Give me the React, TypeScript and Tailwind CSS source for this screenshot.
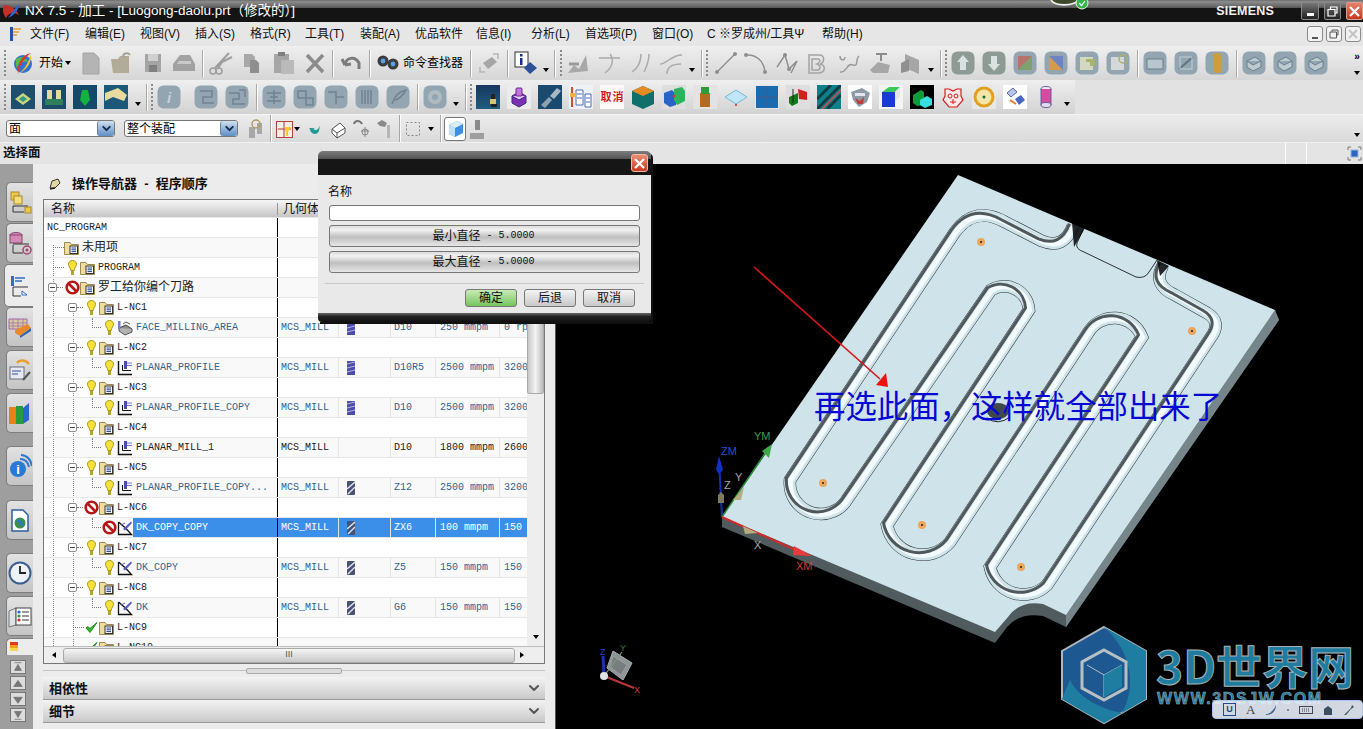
import type { ReactNode } from "react"
import { ChevronDown } from "lucide-react"

const cjk = "[font-family:'Liberation_Sans','Noto_Sans_CJK_SC',sans-serif]"
const mono = "[font-family:'Liberation_Mono','Noto_Sans_CJK_SC',monospace]"

type Row = {
    lvl: 0 | 1 | 2 | 3
    name: string
    state?: "bulb" | "ban" | "check"
    box?: boolean
    op?: "face" | "planar" | "dk" | "flat"
    sel?: boolean
    black?: boolean
    cells?: [string, "" | "mill" | "drill", string, string, string]
}

const rows: Row[] = [
    { lvl: 0, name: "NC_PROGRAM" },
    { lvl: 1, name: "未用项" },
    { lvl: 1, name: "PROGRAM", state: "bulb" },
    { lvl: 1, name: "罗工给你编个刀路", state: "ban", box: true },
    { lvl: 2, name: "L-NC1", state: "bulb", box: true },
    { lvl: 3, name: "FACE_MILLING_AREA", state: "bulb", op: "face", cells: ["MCS_MILL", "mill", "D10", "250 mmpm", "0 rpm"] },
    { lvl: 2, name: "L-NC2", state: "bulb", box: true },
    { lvl: 3, name: "PLANAR_PROFILE", state: "bulb", op: "planar", cells: ["MCS_MILL", "mill", "D10R5", "2500 mmpm", "3200"] },
    { lvl: 2, name: "L-NC3", state: "bulb", box: true },
    { lvl: 3, name: "PLANAR_PROFILE_COPY", state: "bulb", op: "planar", cells: ["MCS_MILL", "mill", "D10", "2500 mmpm", "3200"] },
    { lvl: 2, name: "L-NC4", state: "bulb", box: true },
    { lvl: 3, name: "PLANAR_MILL_1", state: "bulb", op: "planar", black: true, cells: ["MCS_MILL", "", "D10", "1800 mmpm", "2600"] },
    { lvl: 2, name: "L-NC5", state: "bulb", box: true },
    { lvl: 3, name: "PLANAR_PROFILE_COPY...", state: "bulb", op: "planar", cells: ["MCS_MILL", "drill", "Z12", "2500 mmpm", "3200"] },
    { lvl: 2, name: "L-NC6", state: "ban", box: true },
    { lvl: 3, name: "DK_COPY_COPY", state: "ban", op: "dk", sel: true, cells: ["MCS_MILL", "drill", "ZX6", "100 mmpm", "150"] },
    { lvl: 2, name: "L-NC7", state: "bulb", box: true },
    { lvl: 3, name: "DK_COPY", state: "bulb", op: "dk", cells: ["MCS_MILL", "drill", "Z5", "150 mmpm", "150"] },
    { lvl: 2, name: "L-NC8", state: "bulb", box: true },
    { lvl: 3, name: "DK", state: "bulb", op: "dk", cells: ["MCS_MILL", "drill", "G6", "150 mmpm", "150"] },
    { lvl: 2, name: "L-NC9", state: "check" },
    { lvl: 2, name: "L-NC10", state: "check" },
]

const menus: [string, string][] = [
    ["文件(F)", "w-[55px]"],
    ["编辑(E)", "w-[55px]"],
    ["视图(V)", "w-[55px]"],
    ["插入(S)", "w-[55px]"],
    ["格式(R)", "w-[55px]"],
    ["工具(T)", "w-[55px]"],
    ["装配(A)", "w-[55px]"],
    ["优品软件", "w-[61px]"],
    ["信息(I)", "w-[55px]"],
    ["分析(L)", "w-[54px]"],
    ["首选项(P)", "w-[67px]"],
    ["窗口(O)", "w-[55px]"],
    ["C ※罗成州/工具Ψ", "w-[115px]"],
    ["帮助(H)", "w-[50px]"],
]

function Box({ w = 24, h = 24, className = "", children }: { w?: number; h?: number; className?: string; children: ReactNode }) {
    return (
        <svg width={w} height={h} viewBox={`0 0 ${w} ${h}`} className={"shrink-0 " + className}>
            {children}
        </svg>
    )
}

function Bulb() {
    return (
        <Box w={9} h={16}>
            <path d="M4.5 0.5C7 0.5 8.5 2.2 8.5 4.2 8.5 6.5 6.4 7.5 6.2 10.5H2.8C2.6 7.5 0.5 6.5 0.5 4.2 0.5 2.2 2 0.5 4.5 0.5Z" fill="#f8e23a" stroke="#a89520" />
            <rect x="3" y="11" width="3" height="4" fill="#b5a040" />
        </Box>
    )
}

function Ban() {
    return (
        <Box w={15} h={15}>
            <circle cx="7.5" cy="7.5" r="5.8" fill="#fff" stroke="#b51818" strokeWidth="2.6" />
            <path d="M3.5 3.5L11.5 11.5" stroke="#b51818" strokeWidth="2.6" />
        </Box>
    )
}

function Check() {
    return (
        <Box w={13} h={13}>
            <path d="M1 7L5 11.5 12 1.5 5 7.5 3 5.5Z" fill="#2fb32f" stroke="#1e8f1e" />
        </Box>
    )
}

function Folder() {
    return (
        <Box w={15} h={14}>
            <path d="M0.5 1.5H6L7.5 3.5H14.5V13.5H0.5Z" fill="#f0dd9c" stroke="#9a8a55" />
            <rect x="6" y="5" width="7.5" height="7.5" fill="#fff" stroke="#333" />
            <path d="M7.5 7H12M7.5 8.8H12M7.5 10.6H12" stroke="#1f3f8a" />
        </Box>
    )
}

function OpIcon({ kind }: { kind: Row["op"] }) {
    if (kind === "face") {
        return (
            <Box w={17} h={16}>
                <path d="M2 8L9 5 15 9 8 13Z" fill="#8c8c8c" stroke="#444" />
                <path d="M2 8V11L8 15 15 12V9" fill="#b3b3b3" stroke="#555" />
                <rect x="1" y="1" width="2.5" height="8" fill="#7d7fc8" />
                <path d="M6 4L9 2 13 4" stroke="#555" fill="none" />
            </Box>
        )
    }
    if (kind === "planar") {
        return (
            <Box w={16} h={16}>
                <path d="M1.5 1V14.5H15" stroke="#111" strokeWidth="1.4" fill="none" />
                <path d="M5.5 10.5V5" stroke="#111" fill="none" />
                <path d="M5.5 10.5H14" stroke="#111" />
                <rect x="7" y="1" width="3" height="8" fill="#4a4ab8" />
                <path d="M10 3H15M10 5.5H15" stroke="#7a7ad6" />
            </Box>
        )
    }
    return (
        <Box w={16} h={16}>
            <path d="M1.5 2V14.5H14.5L9 8.5 1.5 2" stroke="#111" strokeWidth="1.3" fill="none" />
            <path d="M6 9L14 1.5 15 3 8 10.5Z" fill="#5a5ac8" />
            <path d="M4 5L8 3" stroke="#5a5ac8" />
        </Box>
    )
}

function Minus() {
    return (
        <span className="flex h-[9px] w-[9px] shrink-0 items-center justify-center rounded-[2px] border border-[#8a8a8a] bg-white">
            <span className="h-px w-[5px] bg-[#444]" />
        </span>
    )
}

function Dots({ className = "" }: { className?: string }) {
    return <span className={"block border-t border-dotted border-[#777] " + className} />
}

function ToolIcon({ kind }: { kind: "" | "mill" | "drill" }) {
    if (kind === "mill") {
        return (
            <Box w={8} h={14}>
                <rect width="8" height="14" fill="#4c4cae" />
                <path d="M0 3L8 1M0 7L8 5M0 11L8 9" stroke="#b4b4e8" />
            </Box>
        )
    }
    if (kind === "drill") {
        return (
            <Box w={8} h={14}>
                <rect width="8" height="14" rx="1" fill="#4b5170" />
                <path d="M0 8L8 1M1 13L8 6" stroke="#e0e4f0" strokeWidth="1.4" />
            </Box>
        )
    }
    return null
}

function TreeRow({ row, even }: { row: Row; even: boolean }) {
    const textColor = row.sel ? "text-white" : row.lvl === 3 && !row.black ? "text-[#2f6492]" : "text-[#222]"
    const isCjk = /[^\x00-\x7f]/.test(row.name)
    const pad = row.lvl === 2 ? "pl-[24px]" : row.lvl === 3 ? "pl-[48px]" : row.lvl === 1 ? "pl-[4px]" : "pl-[3px]"
    return (
        <div className={"relative flex h-5 shrink-0 border-t border-[#e6e6e6] " + (even ? "bg-black/[0.025]" : "")}>
            <div className={"flex w-[234px] shrink-0 items-center border-r border-black " + pad}>
                {(row.lvl === 1 || row.lvl === 2) && (
                    <span className="flex w-4 shrink-0 items-center">
                        {row.box ? <Minus /> : <Dots className="ml-[5px] w-[11px]" />}
                        {row.box && <Dots className="w-[6px]" />}
                    </span>
                )}
                {row.lvl === 3 && <span className="mb-[10px] h-[10px] w-[9px] shrink-0 border-b border-l border-dotted border-[#777]" />}
                {row.lvl > 0 && row.state && (
                    <span className={"flex shrink-0 items-center justify-center " + (row.lvl === 1 ? "w-4" : row.lvl === 2 ? "w-[15px]" : "w-4 pl-[1px]")}>
                        {row.state === "bulb" ? <Bulb /> : row.state === "ban" ? <Ban /> : <Check />}
                    </span>
                )}
                {row.lvl === 3 ? (
                    <span className="flex w-[19px] shrink-0"><OpIcon kind={row.op} /></span>
                ) : row.lvl > 0 ? (
                    <span className="flex w-[18px] shrink-0"><Folder /></span>
                ) : null}
                <span className={"flex h-full flex-1 items-center whitespace-nowrap " + (row.sel ? "-ml-[3px] bg-[#3b8fe8] pl-[3px] " : "") + (isCjk ? "text-[12px] " : "text-[10px] ") + mono + " " + textColor}>
                    {row.name}
                </span>
            </div>
            {row.cells ? (
                <div className={"flex flex-1 items-center text-[10px] " + mono + " " + (row.sel ? "bg-[#3b8fe8] text-white" : row.black ? "text-[#222]" : "text-[#2f6492]")}>
                    <span className="flex h-full w-[61px] items-center border-r border-[#e4e4e4] pl-[3px]">{row.cells[0]}</span>
                    <span className="flex h-full w-[52px] items-center border-r border-[#e4e4e4] pl-[8px]"><ToolIcon kind={row.cells[1]} /></span>
                    <span className="flex h-full w-[45px] items-center border-r border-[#e4e4e4] pl-[3px]">{row.cells[2]}</span>
                    <span className="flex h-full w-[64px] items-center border-r border-[#e4e4e4] pl-[4px]">{row.cells[3]}</span>
                    <span className="flex h-full w-[27px] items-center overflow-hidden whitespace-nowrap pl-[4px]">{row.cells[4]}</span>
                </div>
            ) : (
                <div className="flex-1" />
            )}
        </div>
    )
}

function Caret({ className = "" }: { className?: string }) {
    return <span className={"h-0 w-0 shrink-0 border-x-[3px] border-t-[4px] border-x-transparent border-t-black " + className} />
}

function Sep({ className = "" }: { className?: string }) {
    return <span className={"h-[27px] w-[2px] shrink-0 border-x border-l-[#a8a8a8] border-r-white " + className} />
}

function Grip({ className = "" }: { className?: string }) {
    return <span className={"h-[26px] w-[2px] shrink-0 border-l-2 border-dotted border-[#8a8a8a] " + className} />
}

function Tile({ className = "", tone = "#93a5b0", children }: { className?: string; tone?: string; children?: ReactNode }) {
    return (
        <Box className={className}>
            <rect x="0.5" y="0.5" width="23" height="23" rx="6" fill={tone} />
            {children}
        </Box>
    )
}

const gl = { fill: "none", stroke: "#6f8490", strokeWidth: 1.5 }

function ToolbarOne() {
    return (
        <div className="flex h-[34px] items-center bg-gradient-to-b from-[#efefef] to-[#d6d6d6] pl-[4px]">
            <Grip />
            <Box className="ml-[5px]">
                <circle cx="12" cy="13" r="9" fill="#2f73d8" />
                <path d="M5 8C9 5 15 6 18 12 14 9 9 10 5 17Z" fill="#58b84a" />
                <path d="M20 2C14 6 9 13 7 23 6 14 10 4 20 2Z" fill="#e0332a" />
                <path d="M20 3C21 10 17 18 9 22 15 16 18 10 20 3Z" fill="#f2c428" />
            </Box>
            <span className="ml-[4px] w-[24px] whitespace-nowrap text-[12px] text-black">开始</span>
            <Caret className="ml-[2px]" />
            <Box w={20} className="ml-[10px]">
                <path d="M2 2H13L18 7V23H2Z" fill="#b4b4b4" stroke="#a4a4a4" />
            </Box>
            <Box className="ml-[9px]">
                <path d="M1 8H8L10 5H19V22H3Z" fill="#b1ab98" />
                <path d="M13 6C13 2 18 1 20 4" fill="none" stroke="#a5a093" strokeWidth="2" />
            </Box>
            <Box w={18} className="ml-[10px]">
                <rect x="1" y="3" width="16" height="18" fill="#a4a4a4" />
                <rect x="4" y="3" width="10" height="7" fill="#cfcfcf" />
                <rect x="5" y="14" width="8" height="7" fill="#7f7f7f" />
            </Box>
            <Box className="ml-[10px]">
                <path d="M1 13L8 4H18L23 13V20H1Z" fill="#a2a2a2" />
                <path d="M5 13H19V10H7Z" fill="#c9c9c9" />
            </Box>
            <Sep className="ml-[6px]" />
            <Box className="ml-[5px]">
                <circle cx="4" cy="20" r="3" {...gl} stroke="#9e9e9e" />
                <circle cx="10" cy="20" r="3" {...gl} stroke="#9e9e9e" />
                <path d="M6 17L20 2M9 17L13 11M13 11L23 6" stroke="#9e9e9e" strokeWidth="2" fill="none" />
            </Box>
            <Box w={21} className="ml-[8px]">
                <path d="M3 3H11L14 6V16H3Z" fill="#a8a8a8" />
                <path d="M9 9H15L18 12V22H9Z" fill="#8e8e8e" />
            </Box>
            <Box className="ml-[10px]">
                <rect x="2" y="3" width="15" height="19" fill="#a6a6a6" />
                <rect x="6" y="1" width="7" height="4" fill="#7f7f7f" />
                <rect x="9" y="9" width="13" height="14" fill="#bababa" />
            </Box>
            <Box w={20} className="ml-[9px]">
                <path d="M2 4L18 21M18 4L2 21" stroke="#8b8b8b" strokeWidth="3.5" />
            </Box>
            <Sep className="ml-[7px]" />
            <Box className="ml-[6px]">
                <path d="M5 14C6 6 15 5 19 12V18M5 14L2 8M5 14L11 13" fill="none" stroke="#7c7c7c" strokeWidth="3" />
            </Box>
            <Sep className="ml-[5px]" />
            <Box className="ml-[5px]">
                <circle cx="7" cy="10" r="5.5" fill="#3c3c3c" />
                <circle cx="17" cy="13" r="5.5" fill="#3c3c3c" />
                <circle cx="7" cy="10" r="2.4" fill="#5ba0e6" />
                <circle cx="17" cy="13" r="2.4" fill="#5ba0e6" />
            </Box>
            <span className="ml-[3px] w-[60px] whitespace-nowrap text-[12px] text-black">命令查找器</span>
            <Sep className="ml-[7px]" />
            <Box className="ml-[5px]">
                <path d="M6 12L15 6 20 11 11 18Z" fill="#a5a5a5" />
                <path d="M3 16V21H8M21 8V3H16" fill="none" stroke="#b5b5b5" strokeWidth="1.5" />
            </Box>
            <Sep className="ml-[6px]" />
            <Box className="ml-[5px]">
                <rect x="1" y="1" width="13" height="15" fill="#fff" stroke="#333" />
                <rect x="6" y="3" width="2.5" height="2.5" fill="#1c2a8e" />
                <rect x="6" y="7" width="2.5" height="7" fill="#1c2a8e" />
                <path d="M16 11L23 17 16 23 10 17Z" fill="#2c4f96" />
            </Box>
            <Caret className="ml-[5px] mt-[14px]" />
            <Sep className="ml-[5px]" />
            <Grip className="ml-[4px]" />
            <Box className="ml-[4px]">
                <path d="M2 22L8 14 13 18 20 4 22 20Z" fill="#a8a8a8" />
                <path d="M3 13H13" stroke="#9a9a9a" strokeWidth="3" />
            </Box>
            <Box className="ml-[8px]">
                <path d="M1 7H22M7 22C15 16 16 8 12 3" {...gl} stroke="#ababab" />
            </Box>
            <Box className="ml-[7px]">
                <path d="M3 21C9 17 12 10 12 3M15 21C18 15 20 10 20 3" {...gl} stroke="#ababab" />
            </Box>
            <Box className="ml-[6px]">
                <path d="M1 13C8 13 12 4 23 4M8 23C8 15 14 13 22 13" {...gl} stroke="#ababab" />
            </Box>
            <Caret className="ml-[6px] mt-[14px]" />
            <Sep className="ml-[6px]" />
            <Grip className="ml-[3px]" />
            <Box className="ml-[6px]">
                <path d="M3 21L21 3" stroke="#8f8f8f" strokeWidth="1.5" />
                <circle cx="3" cy="21" r="2" fill="#8f8f8f" />
                <circle cx="21" cy="3" r="2" fill="#8f8f8f" />
            </Box>
            <Box className="ml-[6px]">
                <path d="M2 4C12 3 20 10 21 21" {...gl} stroke="#8f8f8f" />
                <circle cx="2" cy="4" r="2" fill="#8f8f8f" />
                <circle cx="21" cy="21" r="2" fill="#8f8f8f" />
            </Box>
            <Box className="ml-[7px]">
                <path d="M2 16L10 4 14 18 22 10 16 22" {...gl} stroke="#8f8f8f" />
                <circle cx="10" cy="4" r="2" fill="#8f8f8f" />
                <circle cx="14" cy="18" r="2" fill="#8f8f8f" />
            </Box>
            <Box className="ml-[7px]">
                <path d="M3 4H13C20 4 18 12 14 13 20 14 20 22 12 22H3Z" {...gl} stroke="#a4a4a4" />
                <path d="M6 8H12C15 8 14 12 11 13 15 14 15 19 11 19H6Z" {...gl} stroke="#a4a4a4" />
            </Box>
            <Box className="ml-[7px]">
                <path d="M3 5C3 10 8 10 8 6M3 21C10 22 10 11 16 14 22 16 18 8 22 5" {...gl} stroke="#9b9b9b" />
            </Box>
            <Box className="ml-[7px]">
                <path d="M2 19L10 11 22 14 20 22H5Z" fill="#a7a7a7" />
                <path d="M8 3H19M13 3V10" stroke="#8b8b8b" strokeWidth="2" />
            </Box>
            <Box className="ml-[7px]">
                <path d="M6 3L20 9V23L6 17Z" fill="#a6a6a6" />
                <path d="M2 12L10 8V20L2 22Z" fill="#8f8f8f" />
            </Box>
            <Caret className="ml-[5px] mt-[14px]" />
            <Sep className="ml-[6px]" />
            <Grip className="ml-[3px]" />
            <span className="ml-[4px] flex items-center gap-[7px]">
                <Tile tone="#8e9a94"><path d="M12 4L18 11H15V19H9V11H6Z" fill="#d9e2e0" /></Tile>
                <Tile tone="#8e9a94"><path d="M12 20L18 13H15V5H9V13H6Z" fill="#d9e2e0" /></Tile>
                <Tile><path d="M5 5H19L5 19Z" fill="#b4746a" /><path d="M19 5V19H5Z" fill="#7fa06f" /></Tile>
                <Tile><path d="M5 5L19 19H5Z" fill="#d59a52" /><path d="M5 5H19V19Z" fill="#6a84c4" /></Tile>
                <Tile><rect x="5" y="6" width="13" height="13" fill="#d3d9c0" /><path d="M11 8H20V15H15V11H11Z" fill="#a6b46e" /></Tile>
                <Tile><rect x="5" y="6" width="13" height="13" fill="#d3d9d9" /><circle cx="17" cy="8" r="4" fill="none" stroke="#a6b46e" strokeWidth="1.5" /></Tile>
            </span>
            <Sep className="ml-[7px]" />
            <span className="ml-[4px] flex items-center gap-[7px]">
                <Tile><rect x="4" y="8" width="16" height="10" fill="#b8c6ce" stroke="#6c7f8b" /></Tile>
                <Tile><path d="M5 18L19 6" stroke="#5f7480" strokeWidth="2" /><rect x="6" y="6" width="12" height="12" fill="none" stroke="#c2cdd3" /></Tile>
                <Tile><rect x="8" y="2" width="8" height="20" rx="3" fill="#c99f3c" /></Tile>
            </span>
            <Sep className="ml-[7px]" />
            <span className="ml-[4px] flex items-center gap-[7px]">
                <Tile><path d="M5 10L13 6 19 10 11 14ZM5 10V16L11 20 19 16V10" fill="#bccad2" stroke="#6b7f8b" /></Tile>
                <Tile><path d="M5 10L13 6 19 10 11 14ZM5 10V16L11 20 19 16V10" fill="#bccad2" stroke="#6b7f8b" /></Tile>
                <Tile><path d="M5 10L13 6 19 10 11 14ZM5 10V16L11 20 19 16V10" fill="#bccad2" stroke="#6b7f8b" /></Tile>
            </span>
            <span className="ml-[26px] flex flex-col items-center gap-[9px] text-[10px] leading-none text-black">
                <span className="font-bold">»</span>
                <Caret />
            </span>
        </div>
    )
}

function Shot({ bg, className = "", children }: { bg: string; className?: string; children?: ReactNode }) {
    return (
        <Box className={className}>
            <rect width="24" height="24" fill={bg} />
            {children}
        </Box>
    )
}

function ToolbarTwo() {
    return (
        <div className="flex h-[34px] items-center bg-[#e2e2e2]">
            <div className="flex h-full w-[1075px] shrink-0 items-center bg-gradient-to-b from-[#efefef] to-[#d2d2d2] pl-[4px]">
                <Grip />
                <span className="ml-[5px] flex items-center gap-[7px]">
                    <Shot bg="#1f4f6e"><path d="M4 14L12 8 20 14 12 20Z" fill="#c9d67c" /><path d="M8 14L12 11 16 14 12 17Z" fill="#2f9a8a" /></Shot>
                    <Shot bg="#1c4a68"><rect x="5" y="5" width="5" height="12" fill="#e2d9a2" /><rect x="14" y="5" width="5" height="12" fill="#e2d9a2" /><rect x="3" y="14" width="18" height="6" fill="#2f7f5a" /></Shot>
                    <Shot bg="#14496a"><path d="M9 5H15L17 15 12 21 7 15Z" fill="#13b23c" /></Shot>
                    <Shot bg="#1c5878"><path d="M1 8L14 3 23 10 20 16 9 12 1 16Z" fill="#e8dba0" /></Shot>
                </span>
                <Caret className="ml-[7px] mt-[14px]" />
                <Sep className="ml-[5px]" />
                <Grip className="ml-[3px]" />
                <Tile className="ml-[4px]"><text x="12" y="18" textAnchor="middle" fontSize="15" fontStyle="italic" fontWeight="bold" fill="#c4d0d7">i</text></Tile>
                <span className="ml-[13px] flex items-center gap-[7px]">
                    <Tile><path d="M6 6H18V12H9V18H20" {...gl} /></Tile>
                    <Tile><path d="M4 8H14V14H8V19H20M14 5H20V12" {...gl} /></Tile>
                </span>
                <Sep className="ml-[7px]" />
                <span className="ml-[4px] flex items-center gap-[7px]">
                    <Tile><path d="M5 8H19M8 12H16M5 16H19M12 5V19" {...gl} /></Tile>
                    <Tile><path d="M5 6H13V13H5ZM13 13H20V20H13Z" {...gl} /></Tile>
                    <Tile><path d="M4 7H12V12H20M12 12V19" {...gl} /></Tile>
                    <Tile><path d="M7 5V19M10 5V19M13 5V19M16 5V19" {...gl} /></Tile>
                    <Tile><path d="M6 19C9 10 14 6 20 5 17 10 14 14 9 15" {...gl} /></Tile>
                </span>
                <Sep className="ml-[7px]" />
                <Tile className="ml-[4px]"><circle cx="12" cy="12" r="7" fill="#aebbc2" /><circle cx="12" cy="12" r="3" fill="#93a5b0" /></Tile>
                <Caret className="ml-[6px] mt-[14px]" />
                <Sep className="ml-[6px]" />
                <Grip className="ml-[3px]" />
                <span className="ml-[4px] flex items-center gap-[7px]">
                    <Box>
                        <defs>
                            <linearGradient id="navy" x1="0" y1="0" x2="0" y2="1">
                                <stop offset="0" stopColor="#17365e" />
                                <stop offset="1" stopColor="#1f5d80" />
                            </linearGradient>
                        </defs>
                        <rect width="24" height="24" fill="url(#navy)" />
                        <rect x="15" y="9" width="4" height="6" fill="#222" />
                        <rect x="14" y="14" width="6" height="5" fill="#d8c66a" />
                        <rect x="15" y="19" width="6" height="3" fill="#222" />
                    </Box>
                    <Shot bg="#ececec"><path d="M5 11L12 7 19 11V18L12 22 5 18Z" fill="#7d2fb3" stroke="#3f2a7a" /><path d="M5 11L12 15 19 11" fill="#e6c8f2" stroke="#3f2a7a" /><rect x="9" y="3" width="6" height="8" rx="1" fill="#c873d8" stroke="#6b2a8a" /></Shot>
                    <Shot bg="#1a4a6e"><path d="M12 11L19 3 23 6 16 14Z" fill="#a9b9c4" /><path d="M3 20L11 12 14 15 7 23Z" fill="#8ea3b2" /></Shot>
                    <Shot bg="#eef2f6"><path d="M3 2V22" stroke="#d94a2a" strokeWidth="2" /><path d="M7 5H14V20H7ZM16 9H22V22H16Z" fill="#fff" stroke="#4a6db5" /><path d="M8 9H13M8 13H13M17 13H21M17 17H21" stroke="#4a6db5" /><rect x="1" y="8" width="6" height="4" fill="#f2b33a" /></Shot>
                    <Shot bg="#fdf8f8"><text x="6" y="16" textAnchor="middle" fontSize="11" fill="#d01818" fontWeight="bold">取</text><text x="18" y="16" textAnchor="middle" fontSize="11" fill="#d01818" fontWeight="bold">消</text></Shot>
                    <Box>
                        <path d="M12 1L23 6V19L12 24 1 19V6Z" fill="#0f6f6a" />
                        <path d="M12 1L23 6 12 11 1 6Z" fill="#e78a23" />
                    </Box>
                    <Shot bg="#dedede"><path d="M2 8L10 5 14 9V20L8 22 2 18Z" fill="#2a63c8" /><path d="M12 4L20 2 23 6V16L15 20 12 15Z" fill="#2fb35a" /><circle cx="12" cy="11" r="1.5" fill="#d0362a" /></Shot>
                    <Shot bg="#e3e3e3"><rect x="7" y="8" width="10" height="14" fill="#b56a1f" /><rect x="8" y="2" width="8" height="7" fill="#2f9a38" /></Shot>
                    <Box><path d="M1 12L12 5 23 12 12 19Z" fill="#bfe7f8" stroke="#7cb7d4" /><circle cx="12" cy="20" r="1" fill="#c23" /></Box>
                    <Shot bg="#e5e5e5"><rect x="1" y="1" width="22" height="22" fill="#1a6bb0" /><path d="M12 1V23M1 12H23" stroke="#4a5a8a" /></Shot>
                    <Shot bg="#dedede"><path d="M3 12L12 8V18L6 21 3 18Z" fill="#117a1a" /><path d="M12 4L21 7V15L13 14Z" fill="#d41f1f" /><path d="M7 4V18" stroke="#222" /></Shot>
                    <Shot bg="#0f7f8a"><path d="M0 24L24 0M0 14L14 0M10 24L24 10" stroke="#123c44" strokeWidth="3" /><path d="M0 24L24 0" stroke="#d04a4a" strokeWidth="1.5" transform="translate(2 3)" /></Shot>
                    <Shot bg="#fff"><path d="M3 7L14 3 22 8 19 17 11 22 5 15Z" fill="#8d99a3" /><path d="M7 13L12 16 16 12 15 19 10 19Z" fill="#c23a3a" /><rect x="7" y="8" width="10" height="3" fill="#dfe5ea" /></Shot>
                    <Shot bg="#f4f4f4"><rect x="3" y="7" width="13" height="15" fill="#1c3ad6" /><path d="M3 7L10 2H21L16 7Z" fill="#38c95a" /><path d="M16 7L21 2V12L16 16Z" fill="#e6e6e6" /></Shot>
                    <Shot bg="#000"><path d="M3 10L11 5 14 7V20L7 21 3 18Z" fill="#0f9a3a" /><path d="M10 15L17 11 22 14V20L15 23 10 20Z" fill="#36dfe0" /></Shot>
                    <Box>
                        <path d="M4 4H8L12 6 16 4H20V11L22 15 16 22H8L2 15 4 11Z" fill="#fbe9e9" stroke="#d41f1f" strokeWidth="1.2" />
                        <circle cx="9" cy="11" r="2" fill="none" stroke="#d41f1f" />
                        <circle cx="15" cy="11" r="2" fill="none" stroke="#d41f1f" />
                        <path d="M9 17H15M12 14V19" stroke="#d41f1f" />
                    </Box>
                    <Shot bg="#e8e8e8"><circle cx="12" cy="12" r="9" fill="#f4e6a8" stroke="#e0a020" strokeWidth="3" /><circle cx="12" cy="12" r="1.5" fill="#0d6d3a" /></Shot>
                    <Shot bg="#fff"><path d="M4 8L10 3 14 7 8 12Z" fill="#b9c4ea" stroke="#5a6ab0" /><path d="M12 14L18 10 22 15 16 20Z" fill="#4a66c4" /><path d="M7 15L13 19" stroke="#e47b2a" strokeWidth="2" /></Shot>
                    <Box><ellipse cx="12" cy="4" rx="5" ry="2.5" fill="#eee" stroke="#665f9a" /><rect x="7" y="4" width="10" height="16" fill="#d64aa0" /><path d="M7 4V20M17 4V20" stroke="#665f9a" /><ellipse cx="12" cy="20" rx="5" ry="2.5" fill="#e6dcf2" stroke="#665f9a" /></Box>
                </span>
                <Caret className="ml-[6px] mt-[14px]" />
            </div>
        </div>
    )
}

function Combo({ text, className = "" }: { text: string; className?: string }) {
    return (
        <div className={"flex h-[17px] items-center justify-between rounded-[3px] border border-[#777] bg-white pl-[2px] " + className}>
            <span className="text-[12px] leading-none text-black">{text}</span>
            <span className="flex h-full w-[17px] items-center justify-center rounded-[3px] border-l border-[#6a7f96] bg-gradient-to-b from-[#cfe0f2] to-[#5e8fc4]">
                <ChevronDown size={13} strokeWidth={3.5} className="text-[#13294a]" />
            </span>
        </div>
    )
}

function SelectionBar() {
    return (
        <div className="flex h-[28px] items-center border-t border-[#f4f4f4] bg-gradient-to-b from-[#ececec] to-[#dadada] pl-[6px]">
            <Combo text="面" className="w-[109px]" />
            <Combo text="整个装配" className="ml-[9px] w-[114px]" />
            <Box w={16} className="ml-[9px]">
                <path d="M2 10H8V21H2ZM10 6H15V17H10Z" fill="#a8a8a8" />
                <circle cx="9" cy="7" r="4" fill="none" stroke="#b09b6a" strokeWidth="1.5" />
            </Box>
            <Sep className="ml-[7px]" />
            <Box w={17} className="ml-[4px]">
                <rect x="0.5" y="4.5" width="16" height="16" fill="#f6f0ea" stroke="#b04040" />
                <path d="M8 4V20M2 12H15" stroke="#c03030" />
                <path d="M8 10H15L12 15V19H10V15Z" fill="#f1ce36" />
            </Box>
            <Caret className="ml-[1px]" />
            <Box w={14} className="ml-[7px]">
                <path d="M3 12C3 17 10 19 12 14L13 8C13 8 11 16 6 12L8 11H2Z" fill="#1f9a95" />
            </Box>
            <Box w={16} className="ml-[9px]">
                <path d="M2 12L10 6 15 11V16L7 21 2 16Z" fill="#fff" stroke="#555" />
                <path d="M2 12L7 16 15 11M7 16V21" fill="none" stroke="#555" />
            </Box>
            <Box w={16} className="ml-[7px]">
                <path d="M8 14H16M12 10V20" stroke="#888" />
                <circle cx="12" cy="15" r="3" fill="none" stroke="#888" />
                <path d="M1 7C2 3 7 3 9 7" stroke="#777" strokeWidth="2" fill="none" />
            </Box>
            <Box w={16} className="ml-[7px]">
                <path d="M1 6L6 3 11 6 9 10 4 9Z" fill="#8a8a8a" />
                <rect x="11" y="8" width="3" height="13" fill="#b5b5b5" />
            </Box>
            <Sep className="ml-[7px]" />
            <Box w={16} className="ml-[4px]">
                <rect x="1.5" y="5.5" width="13" height="13" fill="none" stroke="#888" strokeDasharray="2 2" />
            </Box>
            <Caret className="ml-[7px]" />
            <Sep className="ml-[6px]" />
            <span className="ml-[2px] flex h-[24px] w-[22px] items-center justify-center rounded-[3px] border border-[#777] bg-white">
                <Box w={17} h={18}>
                    <path d="M2 5L10 1 16 4V13L8 17 2 14Z" fill="#3b8fe0" />
                    <path d="M2 5L8 8V17L2 14Z" fill="#bfe0f6" />
                    <path d="M2 5L10 1 16 4 8 8Z" fill="#d9eefb" />
                </Box>
            </span>
            <Box w={16} className="ml-[3px]">
                <rect x="6" y="3" width="5" height="10" fill="#8a8a8a" />
                <path d="M1 22V16H15V22Z" fill="#9e9e9e" />
            </Box>
            <Caret className="ml-auto mr-[3px] mt-[12px]" />
        </div>
    )
}

function TabBtn({ active, className = "", children }: { active?: boolean; className?: string; children: ReactNode }) {
    return (
        <div className={"flex h-[40px] items-center justify-center rounded-l-[5px] border border-r-0 border-[#7d7d7d] " + (active ? "h-[43px] w-[29px] bg-[#ececec]" : "ml-[6px] w-[27px] bg-gradient-to-b from-[#e2e2e2] to-[#c4c4c4]") + " " + className}>
            {children}
        </div>
    )
}

function LeftTabs() {
    return (
        <div className="flex w-[33px] shrink-0 flex-col items-end bg-[#9e9e9e] pt-[18px]">
            <TabBtn>
                <Box>
                    <rect x="3" y="2" width="8" height="8" fill="#f0c94a" stroke="#a58a2c" />
                    <rect x="6" y="6" width="8" height="8" fill="#f7dd76" stroke="#a58a2c" />
                    <path d="M5 16V22H16M5 16H20" stroke="#333" fill="none" />
                    <rect x="17" y="17" width="6" height="6" fill="#efc84a" stroke="#a58a2c" />
                </Box>
            </TabBtn>
            <TabBtn className="mt-px">
                <Box>
                    <ellipse cx="8" cy="4" rx="6" ry="2.5" fill="#d58ab5" stroke="#85466e" />
                    <rect x="2" y="4" width="12" height="8" fill="#d58ab5" stroke="#85466e" />
                    <path d="M5 14V22H15M5 13H21" stroke="#333" fill="none" />
                    <circle cx="19" cy="19" r="4" fill="none" stroke="#a0466e" strokeWidth="1.5" />
                    <circle cx="19" cy="19" r="1.5" fill="#a0466e" />
                </Box>
            </TabBtn>
            <TabBtn active className="mt-px">
                <Box>
                    <rect x="4" y="2" width="3" height="10" fill="#2d6ec4" />
                    <path d="M8 4H18M8 7H15" stroke="#2d6ec4" strokeWidth="1.5" />
                    <path d="M6 13V22H14M6 13H21" stroke="#333" fill="none" />
                    <path d="M15 21V17L20 21Z" fill="#fff" stroke="#2d6ec4" />
                </Box>
            </TabBtn>
            <TabBtn>
                <Box>
                    <path d="M1 4H19V14H1Z" fill="#d8c8a0" stroke="#9d6bb0" />
                    <path d="M5 4V14M10 4V14M15 4V14M1 8H19M1 11H19" stroke="#9d6bb0" strokeWidth="0.7" />
                    <path d="M7 15L20 9 23 13 12 21 7 18Z" fill="#e88a2c" />
                    <path d="M12 21L23 13V16L12 23Z" fill="#2a63b8" />
                </Box>
            </TabBtn>
            <TabBtn className="mt-[3px]">
                <Box>
                    <rect x="2" y="9" width="14" height="12" fill="#e8eaf2" stroke="#6a6f80" />
                    <path d="M4 13H13M4 16H10" stroke="#2a4ea0" />
                    <path d="M9 5C12 1 18 2 21 6" stroke="#e8a030" strokeWidth="2.5" fill="none" />
                    <path d="M15 22L22 14" stroke="#555" strokeWidth="2" />
                </Box>
            </TabBtn>
            <TabBtn className="mt-[3px]">
                <Box>
                    <rect x="1" y="6" width="7" height="17" fill="#e6821e" />
                    <rect x="8" y="5" width="7" height="18" fill="#2a9a42" />
                    <path d="M15 7L21 2V19L15 23Z" fill="#2a66d0" />
                </Box>
            </TabBtn>
            <TabBtn className="mt-[13px]">
                <Box>
                    <circle cx="10" cy="15" r="8" fill="#2a79d4" />
                    <text x="10" y="20" textAnchor="middle" fontSize="13" fontWeight="bold" fill="#fff">i</text>
                    <path d="M12 5C17 5 20 8 21 13M13 1C19 1 23 6 24 12" fill="none" stroke="#2a79d4" strokeWidth="2" />
                </Box>
            </TabBtn>
            <TabBtn className="mt-[14px]">
                <Box>
                    <path d="M4 2H15L20 7V23H4Z" fill="#fff" stroke="#2d5f9e" strokeWidth="1.5" />
                    <circle cx="12" cy="15" r="5.5" fill="#3c8e4a" />
                    <path d="M9 12C12 13 13 15 15 18" stroke="#2a79d4" strokeWidth="2.5" fill="none" />
                </Box>
            </TabBtn>
            <TabBtn className="mt-[13px]">
                <Box>
                    <circle cx="12" cy="12" r="10.5" fill="#eef2f7" stroke="#3c5f8f" strokeWidth="2" />
                    <path d="M12 5V12H18" stroke="#222" strokeWidth="1.8" fill="none" />
                </Box>
            </TabBtn>
            <TabBtn className="mt-[3px]">
                <Box>
                    <path d="M1 7L8 4V21L1 23Z" fill="#dfe3e6" stroke="#777" />
                    <rect x="8" y="4" width="15" height="17" fill="#fff" stroke="#444" />
                    <circle cx="11" cy="8" r="1.6" fill="#2a63c8" />
                    <circle cx="11" cy="12" r="1.6" fill="#2a9a42" />
                    <circle cx="11" cy="16" r="1.6" fill="#d02a2a" />
                    <path d="M14 8H21M14 12H21M14 16H21" stroke="#333" />
                </Box>
            </TabBtn>
            <div className="mt-[2px] flex h-[17px] w-[27px] items-start justify-center overflow-hidden rounded-tl-[5px] border-l border-t border-[#7d7d7d] bg-[#ececec]">
                <Box h={14}>
                    <rect x="2" y="3" width="8" height="3" fill="#e03a1e" />
                    <rect x="2" y="6" width="8" height="3" fill="#f0a020" />
                    <rect x="2" y="9" width="8" height="3" fill="#f4dc40" />
                </Box>
            </div>
            <div className="mt-[5px] flex w-full flex-col items-center gap-[2px] pl-[2px]">
                {["M4 2H12M8 4L4 11H12Z", "M8 4L3 11H13Z", "M3 5H13L8 12Z", "M4 3H12L8 10ZM4 12H12"].map((d) => (
                    <Box key={d} w={16} h={14} className="border border-[#777] bg-[#dcdcdc]">
                        <path d={d} fill="#777" stroke="#777" />
                    </Box>
                ))}
            </div>
        </div>
    )
}

function NavPanel() {
    return (
        <div className="flex w-[523px] shrink-0 flex-col border-r border-[#555] bg-[#ececec] pl-[10px] pr-[10px]">
            <div className="flex h-[35px] shrink-0 items-center pl-[5px] pt-[5px]">
                <Box w={14} h={14}>
                    <path d="M2 11L4 4 10 2 12 6 7 11Z" fill="#e0d8a0" stroke="#333" />
                    <path d="M2 12L7 11" stroke="#222" strokeWidth="1.5" />
                </Box>
                <span className="ml-[10px] whitespace-pre text-[13px] font-bold text-[#111]">操作导航器  -  程序顺序</span>
            </div>
            <div className="flex h-[465px] shrink-0 flex-col border border-[#777] bg-white">
                <div className="flex h-[17px] shrink-0 items-center bg-gradient-to-b from-[#f6f6f6] to-[#c6c6c6] text-[12px] leading-none text-[#111]">
                    <span className="w-[234px] border-r border-[#999] pl-[7px]">名称</span>
                    <span className="flex-1 pl-[5px]">几何体</span>
                </div>
                <div className="flex min-h-0 flex-1">
                    <div className="relative flex h-[429px] flex-1 flex-col overflow-hidden">
                        <span className="absolute bottom-0 left-[9px] top-[28px] border-l border-dotted border-[#888]" />
                        <span className="absolute bottom-0 left-[29px] top-[96px] border-l border-dotted border-[#888]" />
                        {rows.map((r, i) => (
                            <TreeRow key={r.name} row={r} even={i % 2 === 1} />
                        ))}
                    </div>
                    <div className="flex h-[429px] w-[17px] shrink-0 flex-col bg-[#eeeeee]">
                        <div className="h-[177px] shrink-0 rounded-b-[2px] border border-[#aaa] bg-gradient-to-r from-[#c8c8c8] via-[#f4f4f4] to-[#bcbcbc]" />
                        <div className="flex flex-1 items-end justify-center pb-[7px]"><Caret /></div>
                    </div>
                </div>
                <div className="flex h-[17px] shrink-0 items-center border-t border-[#bbb] bg-[#eeeeee] pl-[8px]">
                    <span className="h-0 w-0 border-y-[3px] border-r-[4px] border-y-transparent border-r-black" />
                    <span className="ml-[7px] flex h-[15px] w-[452px] items-center justify-center rounded-[3px] border border-[#aaa] bg-gradient-to-b from-[#f6f6f6] to-[#c8c8c8] text-[9px] text-[#555]">III</span>
                    <span className="ml-[5px] h-0 w-0 border-y-[3px] border-l-[4px] border-y-transparent border-l-black" />
                </div>
            </div>
            <div className="flex h-[13px] shrink-0 items-center">
                <span className="h-px w-[203px] bg-[#c4c4c4]" />
                <span className="h-[6px] w-[96px] rounded-[2px] border border-[#aaa] bg-[#dcdcdc]" />
                <span className="h-px flex-1 bg-[#c4c4c4]" />
            </div>
            <PanelBar label="相依性" />
            <PanelBar label="细节" />
        </div>
    )
}

function PanelBar({ label }: { label: string }) {
    return (
        <div className="flex h-[23px] shrink-0 items-center justify-between border-b border-[#999] bg-gradient-to-b from-[#f4f4f4] to-[#c9c9c9] pl-[6px] pr-[3px]">
            <span className="text-[13px] font-bold leading-none text-[#111]">{label}</span>
            <ChevronDown size={16} strokeWidth={3} className="text-[#555]" />
        </div>
    )
}

const groove =
    "M1073 226Q1064 250 1042 241L1005 222Q975 205 955 232L790 480A31 31 0 0 0 848 498L991 290A25 25 0 0 1 1029 310L887 525A36 36 0 0 0 950 542L1088 333A30 30 0 0 1 1142 337L990 567A34 34 0 0 0 1047 585L1211 337Q1222 322 1207 313L1175 295Q1152 285 1163 265"

function Viewport() {
    return (
        <div className="relative min-w-0 flex-1 bg-black">
            <svg viewBox="556 164 807 565" className="block h-full w-full">
                <path d="M722 517V527L995 643 1007 627Q1020 612 1043 616L1066 627 1279 320 1275 310Z" fill="#505b5d" />
                <path d="M1275 310L1279 320 1066 627V615Z" fill="#76858a" />
                <path d="M958 175L1275 310 1066 615 1043 604Q1020 600 1008 617L995 632 722 517Z" fill="#cfe3ea" />
                <path d={groove} fill="none" stroke="#2b3235" strokeWidth="12.5" />
                <path d={groove} fill="none" stroke="#cfe3ea" strokeWidth="11.5" />
                <path d={groove} fill="none" stroke="#f4fbff" strokeWidth="5" transform="translate(0.5 0.5)" />
                <path d={groove} fill="none" stroke="#4f585b" strokeWidth="3" transform="translate(-3.5 -2.2)" />
                <path d="M1083 230L1077 243Q1075 249 1084 252L1136 277Q1145 279 1149 272L1157 260" fill="none" stroke="#2a3133" />
                <path d="M1072 222L1085 228 1074 247Z" fill="#000" opacity="0.85" />
                <path d="M1157 260L1169 266 1160 276Z" fill="#000" opacity="0.85" />
                {[[981, 242], [1192, 331], [823, 483], [922, 525], [1021, 567]].map(([x, y]) => (
                    <g key={x}>
                        <circle cx={x} cy={y} r="4" fill="#efa55a" />
                        <circle cx={x} cy={y} r="1" fill="#222" />
                    </g>
                ))}
                <ellipse cx="998" cy="411" rx="11" ry="8" fill="#3f484b" />
                <path d="M987 418Q998 426 1010 417" fill="none" stroke="#222" />
                <path d="M754 267L880 379" stroke="#d81818" strokeWidth="1.6" />
                <path d="M888 387L876 385 886 373Z" fill="#f01010" />
                <text x="814" y="418" fontSize="31.4" fill="#0808d4" fontFamily="'Noto Sans CJK SC', sans-serif">再选此面，这样就全部出来了</text>

                <path d="M722 517L719 460" stroke="#1030b8" strokeWidth="2" />
                <path d="M716 470L719 456 723 470 719 474Z" fill="#1030c8" />
                <path d="M722 517L768 449" stroke="#2f8f3a" strokeWidth="1.5" />
                <path d="M762 451L772 444 769 458Z" fill="#3fa84a" />
                <path d="M722 517L800 552" stroke="#d02a2a" strokeWidth="2" />
                <path d="M794 546L812 556 793 555Z" fill="#e83a3a" />
                <path d="M718 503V495L721 492 724 495V503Z" fill="#7f7a5c" />
                <path d="M733 500L744 487 741 500Z" fill="#b5aa80" />
                <path d="M743 526L758 533 745 534Z" fill="#b5aa80" />
                <g fontSize="11" fontFamily="'Liberation Sans', sans-serif">
                    <text x="721" y="455" fill="#2a4fd0">ZM</text>
                    <text x="754" y="440" fill="#3f9a4a">YM</text>
                    <text x="796" y="570" fill="#d83a3a">XM</text>
                    <text x="724" y="489" fill="#a8a8a8">Z</text>
                    <text x="735" y="481" fill="#a8a8a8">Y</text>
                    <text x="754" y="549" fill="#a8a8a8">X</text>
                </g>

                <path d="M613 651L632 663 623 680 607 668Z" fill="#8f9496" stroke="#a8adaf" />
                <path d="M613 656L627 665 621 675 610 667Z" fill="#777c7e" stroke="#9a9fa1" />
                <path d="M604 676L622 652" stroke="#7f9a7a" strokeWidth="1.2" />
                <path d="M604 676L603 656" stroke="#1a30b0" strokeWidth="3" />
                <path d="M604 676L634 688" stroke="#b8383a" strokeWidth="2" />
                <circle cx="604" cy="676" r="4" fill="#dfe3e6" />
                <g fontSize="9" fontFamily="'Liberation Sans', sans-serif">
                    <text x="600" y="655" fill="#2a40c8">Z</text>
                    <text x="620" y="651" fill="#3a7a4a">Y</text>
                    <text x="634" y="693" fill="#c83a3a">X</text>
                </g>

                <path d="M1104 627L1146 651V699L1104 723 1062 699V651Z" fill="#1d5990" stroke="#aeb6bc" strokeWidth="2" />
                <path d="M1104 627L1146 651V699L1122 713C1135 690 1135 655 1104 627Z" fill="#1f7da2" />
                <path d="M1062 699L1086 713 1104 723 1122 713C1105 710 1080 700 1070 680Z" fill="#1f7da2" />
                <path d="M1104 650L1126 662V688L1104 700 1082 688V662Z" fill="#1d5990" stroke="#b8c0c6" strokeWidth="3" />
                <path d="M1087 665L1104 675 1122 665M1104 675V697" fill="none" stroke="#b8c0c6" />
                <path d="M1104 675L1122 665V687L1104 697Z" fill="#1f7da2" />
                <text x="1156" y="684" fontSize="46" fontWeight="bold" fill="#1f7c9f" stroke="#a6b2b8" strokeWidth="1" fontFamily="'Noto Sans CJK SC', sans-serif">3D世界网</text>
                <text x="1157" y="704" fontSize="16" fontWeight="bold" letterSpacing="1.6" fill="#1f7c9f" stroke="#a6b2b8" strokeWidth="0.5" fontFamily="'Liberation Sans', sans-serif">WWW.3DSJW.COM</text>
            </svg>
            <div className="absolute bottom-[10px] right-0 flex h-[19px] w-[151px] items-center gap-[10px] rounded-[4px] border border-[#a9c4e6] bg-[#e8f0fb]/90 pl-[10px]">
                <span className="flex h-[13px] w-[13px] items-center justify-center border border-[#224a8a] text-[9px] font-bold leading-none text-[#224a8a]">U</span>
                <span className="text-[13px] leading-none text-[#444] [font-family:'Liberation_Serif',serif]">A</span>
                <Box w={12} h={12}><path d="M1 10C5 10 9 6 11 1 11 7 7 11 1 11Z" fill="#3c5f8f" /></Box>
                <span className="h-[2px] w-[2px] bg-[#888]" />
                <Box w={14} h={10}><rect x="0.5" y="1.5" width="13" height="7" fill="none" stroke="#445" /><path d="M3 4H11M3 6H11" stroke="#445" strokeDasharray="1 1" /></Box>
                <Box w={10} h={12}><path d="M1 11V5L5 2 9 5V11Z" fill="#3a5060" /></Box>
                <Box w={12} h={12}><path d="M1 11L8 4 9 1 11 3 8 5 3 11Z" fill="#3a5060" /></Box>
            </div>
        </div>
    )
}

function DiaBtn({ label }: { label: string }) {
    return (
        <div className="mt-[4px] flex h-[22px] items-center justify-center whitespace-pre rounded-[3px] border border-[#777] bg-[linear-gradient(#dcdcdc,#f2f2f2_20%,#bfbfbf_55%,#e6e6e6)] pr-[2px] text-[#111]">
            <span className="text-[12px] leading-none">{label}</span>
            <span className={"text-[10px] leading-none " + mono}> - 5.0000</span>
        </div>
    )
}

function Dialog() {
    const btn = "flex h-[18px] w-[52px] items-center justify-center rounded-[3px] border border-[#777] text-[12px] leading-none text-[#111]"
    return (
        <div className="absolute left-[318px] top-[151px] flex w-[333px] flex-col rounded-t-[5px] shadow-[2px_2px_0_#111]">
            <div className="flex h-[24px] items-start justify-end rounded-t-[5px] bg-[linear-gradient(#7d7d7d,#555_32%,#161616_34%,#161616)] pr-[3px] pt-[3px]">
                <span className="flex h-[18px] w-[17px] items-center justify-center rounded-[3px] border border-[#f3b9a8] bg-gradient-to-b from-[#ea8a72] to-[#c7391f]">
                    <svg width="11" height="11" viewBox="0 0 11 11"><path d="M1 1L10 10M10 1L1 10" stroke="#fff" strokeWidth="2.2" /></svg>
                </span>
            </div>
            <div className="flex h-[138px] flex-col bg-[#e9e9e9] pl-[11px] pr-[11px]">
                <span className="-ml-px mt-[10px] text-[12px] leading-[14px] text-[#111]">名称</span>
                <div className="mt-[6px] h-[16px] rounded-[3px] border border-[#777] bg-white" />
                <DiaBtn label="最小直径" />
                <DiaBtn label="最大直径" />
                <div className="-mx-[4px] mt-[10px] h-px bg-[#c9c9c9]" />
                <div className="mt-[5px] flex justify-end gap-[7px] pr-[5px]">
                    <button className={btn + " bg-gradient-to-b from-[#c8ecb4] to-[#74c45c]"}>确定</button>
                    <button className={btn + " bg-gradient-to-b from-[#f4f4f4] to-[#c8c8c8]"}>后退</button>
                    <button className={btn + " bg-gradient-to-b from-[#f4f4f4] to-[#c8c8c8]"}>取消</button>
                </div>
            </div>
            <div className="h-[9px] rounded-b-[4px] bg-[linear-gradient(#666,#222_40%,#111)]" />
        </div>
    )
}

export default function App() {
    return (
        <div className={"relative flex h-[729px] w-[1363px] flex-col overflow-hidden bg-black " + cjk}>
            <div className="relative flex h-[22px] shrink-0 items-center bg-[linear-gradient(#6c6c6c,#8c8c8c_8%,#5c5c5c_34%,#141414_36%,#141414)] pl-[2px]">
                <Box w={18} h={16}>
                    <path d="M2 2C9 2 14 6 17 12 12 9 7 9 4 15 1 11 0 6 2 2Z" fill="#c2302a" />
                    <path d="M17 1C17 7 13 12 6 15 10 10 12 6 17 1Z" fill="#2a66d0" />
                </Box>
                <span className="ml-[5px] whitespace-pre text-[13.5px] leading-none text-white">NX 7.5 - 加工 - [Luogong-daolu.prt（修改的）]</span>
                <svg width="40" height="10" viewBox="0 0 40 10" className="absolute left-[1050px] top-0">
                    <path d="M1 0C5 6 22 7 29 0" fill="#3f4a2a" stroke="#f4f4f4" strokeWidth="1.6" />
                    <circle cx="32" cy="3" r="6" fill="#36b54a" stroke="#e8f5e8" />
                    <path d="M29 3L31.5 5.5 35 1" fill="none" stroke="#fff" strokeWidth="1.2" />
                </svg>
                <span className="ml-auto text-[12.5px] font-bold leading-none tracking-[0.2px] text-[#f0f0f0]">SIEMENS</span>
                <span className="ml-[27px] flex items-center gap-[5px]">
                    <span className="flex h-[18px] w-[18px] items-end justify-center rounded-[2px] border border-[#888] bg-gradient-to-b from-[#777] to-[#222] pb-[3px]"><span className="h-[3px] w-[7px] bg-white" /></span>
                    <span className="flex h-[18px] w-[17px] items-center justify-center rounded-[2px] border border-[#888] bg-gradient-to-b from-[#777] to-[#222]">
                        <svg width="11" height="11" viewBox="0 0 11 11"><path d="M3.5 3V1H10V7H8M1 3.5H8V10H1Z" fill="none" stroke="#fff" strokeWidth="1.2" /></svg>
                    </span>
                    <span className="flex h-[18px] w-[17px] items-center justify-center rounded-[2px] border border-[#d8a090] bg-gradient-to-b from-[#e8806a] to-[#c2381e]">
                        <svg width="11" height="11" viewBox="0 0 11 11"><path d="M1 1L10 10M10 1L1 10" stroke="#fff" strokeWidth="2.2" /></svg>
                    </span>
                </span>
            </div>
            <div className="flex h-[24px] shrink-0 items-center bg-[#e6e6e6] pl-[7px]">
                <Box w={16} h={18}>
                    <rect x="3" y="2" width="3" height="14" fill="#2d4fa8" />
                    <path d="M6 4H14M6 7H12M6 10H10" stroke="#e8a030" strokeWidth="1.6" />
                </Box>
                <span className="ml-[7px] flex items-center text-[12px] leading-none text-[#111]">
                    {menus.map(([m, w]) => (
                        <span key={m} className={"whitespace-nowrap " + w}>{m}</span>
                    ))}
                </span>
                <span className="ml-auto flex items-center gap-[3px] pr-[2px]">
                    {["_", "o", "x"].map((k) => (
                        <span key={k} className="flex h-[16px] w-[16px] items-center justify-center rounded-[3px] border border-[#8a8a8a] bg-[#f2f2f2]">
                            {k === "_" && <span className="mt-[7px] h-[2px] w-[6px] bg-[#555]" />}
                            {k === "o" && <svg width="10" height="10" viewBox="0 0 10 10"><path d="M3 2.5V1H9V6H7.5M1 3H7.5V9H1Z" fill="none" stroke="#555" /></svg>}
                            {k === "x" && <svg width="10" height="10" viewBox="0 0 10 10"><path d="M1 1L9 9M9 1L1 9" stroke="#c4c4c4" strokeWidth="2" /></svg>}
                        </span>
                    ))}
                </span>
            </div>
            <ToolbarOne />
            <ToolbarTwo />
            <SelectionBar />
            <div className="flex h-[22px] shrink-0 items-center border-t border-[#f2f2f2] bg-[#e4e4e4] pl-[3px]">
                <span className="text-[12.5px] font-bold text-[#111]">选择面</span>
                <span className="ml-auto mr-[20px] h-full border-l border-[#fff]" />
                <span className="mr-[40px] h-full border-l border-[#fff]" />
                <Box w={15} h={15} className="mr-px">
                    <path d="M1 4V1H4M11 1H14V4M14 11V14H11M4 14H1V11" fill="none" stroke="#777" />
                    <rect x="4" y="4" width="7" height="7" fill="#2a66c0" stroke="#9ab4d4" />
                </Box>
            </div>
            <div className="flex min-h-0 flex-1">
                <LeftTabs />
                <NavPanel />
                <Viewport />
            </div>
            <Dialog />
        </div>
    )
}
